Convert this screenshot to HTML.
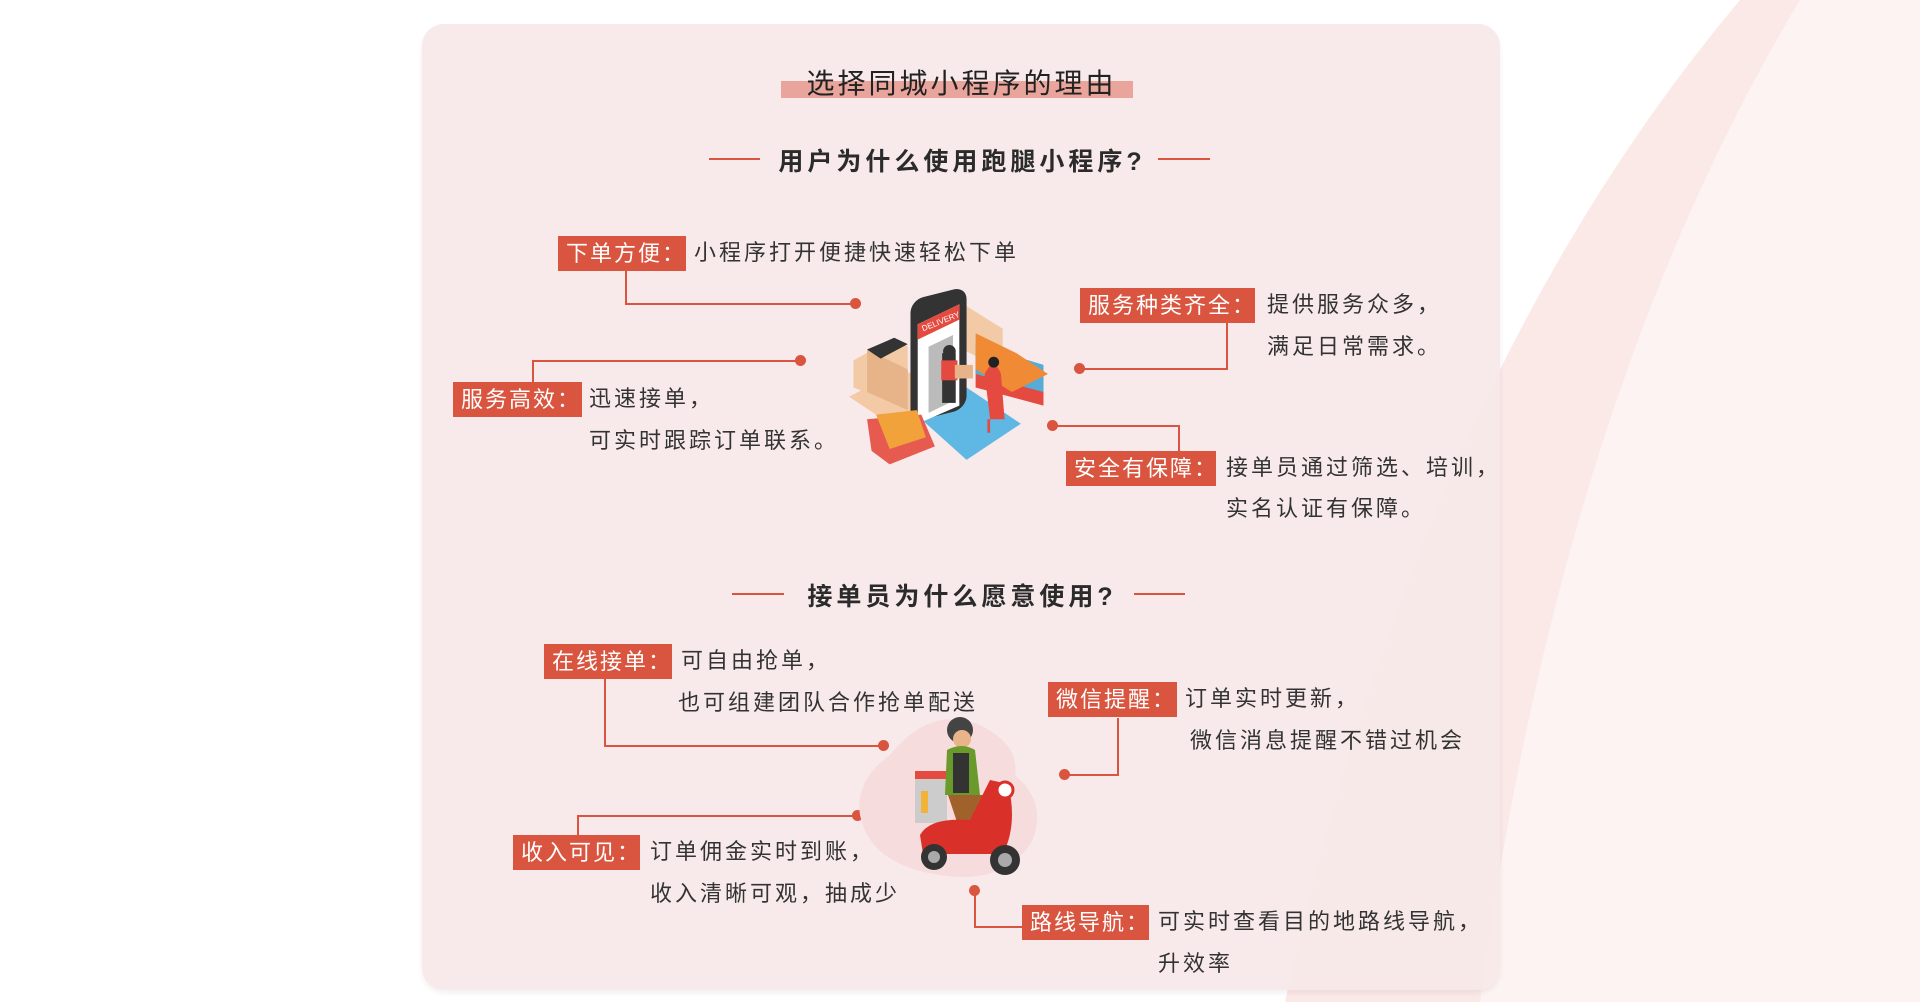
<!DOCTYPE html>
<html><head><meta charset="utf-8"><style>
*{margin:0;padding:0;box-sizing:border-box}
body{width:1920px;height:1002px;background:#fff;position:relative;overflow:hidden;font-family:"Liberation Sans","Noto Sans CJK SC",sans-serif;color:#333}
.bg{position:absolute;left:0;top:0}
.card{position:absolute;left:422px;top:24px;width:1078px;height:966px;border-radius:22px;background:rgba(248,232,232,0.93);box-shadow:0 3px 6px rgba(0,0,0,0.06)}
.t{position:absolute;white-space:nowrap}
.title{left:0;width:1920px;text-align:center;top:62px;font-size:28px;color:#222;letter-spacing:3px;padding-left:3px}
.hl{position:absolute;left:781px;top:81px;width:352px;height:17px;background:#e9a59b}
.sub{left:0;width:1920px;text-align:center;font-size:25px;font-weight:bold;color:#2b2b2b;letter-spacing:4px;padding-left:4px}
.hr{position:absolute;height:2px;background:#d9553f}
.lab{position:absolute;background:#d9553f;color:#fff;font-size:22px;line-height:35px;height:35px;padding-left:8px;white-space:nowrap;letter-spacing:2px}
.tx{position:absolute;font-size:22px;color:#333;white-space:nowrap;line-height:26px;letter-spacing:3px}
.ln{position:absolute;background:#d9553f}
.dot{position:absolute;width:11px;height:11px;border-radius:50%;background:#d9553f}
</style></head><body>
<svg class="bg" width="1920" height="1002"><path d="M1740 0 Q1420 380 1285 1002 L1920 1002 L1920 0Z" fill="#fbe9e8"/><path d="M1800 0 Q1560 400 1480 1002 L1920 1002 L1920 0Z" fill="#fdf3f2"/></svg>
<div class="card"></div>
<div class="hl"></div>
<div class="t title">选择同城小程序的理由</div>
<div class="hr" style="left:709px;top:158px;width:51px"></div>
<div class="hr" style="left:1158px;top:158px;width:52px"></div>
<div class="t sub" style="top:142px">用户为什么使用跑腿小程序?</div>
<div class="hr" style="left:732px;top:593px;width:52px"></div>
<div class="hr" style="left:1134px;top:593px;width:51px"></div>
<div class="t sub" style="top:577px">接单员为什么愿意使用?</div>

<div class="ln" style="left:625px;top:271px;width:2px;height:34px"></div>
<div class="ln" style="left:625px;top:303px;width:230px;height:2px"></div>
<div class="dot" style="left:850px;top:298px"></div>
<div class="ln" style="left:532px;top:361px;width:2px;height:22px"></div>
<div class="ln" style="left:532px;top:360px;width:268px;height:2px"></div>
<div class="dot" style="left:795px;top:355px"></div>
<div class="ln" style="left:1226px;top:323px;width:2px;height:46px"></div>
<div class="ln" style="left:1080px;top:368px;width:148px;height:2px"></div>
<div class="dot" style="left:1074px;top:363px"></div>
<div class="ln" style="left:1178px;top:426px;width:2px;height:26px"></div>
<div class="ln" style="left:1053px;top:425px;width:127px;height:2px"></div>
<div class="dot" style="left:1047px;top:420px"></div>

<div class="lab" style="left:558px;top:236px;width:128px">下单方便：</div>
<div class="tx" style="left:694px;top:240px">小程序打开便捷快速轻松下单</div>
<div class="lab" style="left:1080px;top:288px;width:175px">服务种类齐全：</div>
<div class="tx" style="left:1267px;top:292px">提供服务众多，</div>
<div class="tx" style="left:1267px;top:334px">满足日常需求。</div>
<div class="lab" style="left:453px;top:382px;width:129px">服务高效：</div>
<div class="tx" style="left:589px;top:386px">迅速接单，</div>
<div class="tx" style="left:589px;top:428px">可实时跟踪订单联系。</div>
<div class="lab" style="left:1066px;top:451px;width:150px">安全有保障：</div>
<div class="tx" style="left:1226px;top:455px">接单员通过筛选、培训，</div>
<div class="tx" style="left:1226px;top:496px">实名认证有保障。</div>

<svg style="position:absolute;left:838px;top:288px" width="230" height="190" viewBox="0 0 250 210">
<polygon points="10,120 70,90 130,125 70,160" fill="#f3c9a6"/>
<polygon points="15,80 60,55 75,65 75,135 15,110" fill="#f2cba6"/><polygon points="30,68 75,90 75,135 30,115" fill="#e7b489"/>
<polygon points="30,68 60,55 75,62 45,78" fill="#333"/>
<polygon points="140,20 180,45 180,90 140,70" fill="#f2cba6"/>
<polygon points="150,72 225,95 225,130 150,110" fill="#e44a3f"/>
<polygon points="150,62 225,85 225,115 150,95" fill="#55acd8"/>
<polygon points="150,50 195,72 230,95 190,115 150,90" fill="#f08a35"/>
<polygon points="90,145 140,110 200,150 140,190" fill="#5fb8e4"/>
<rect x="78" y="8" width="62" height="135" rx="14" fill="#333" transform="skewY(-14) translate(0,25)"/>
<polygon points="86,40 132,18 132,130 86,150" fill="#fff"/>
<polygon points="86,40 132,18 132,35 86,57" fill="#e44a3f"/>
<text x="92" y="48" fill="#fff" font-size="9" font-family="Liberation Sans" transform="rotate(-22 92 48)">DELIVERY</text>
<polygon points="98,65 125,52 125,125 98,138" fill="#bbb"/>
<rect x="113" y="72" width="15" height="55" fill="#333"/><circle cx="121" cy="70" r="7" fill="#333"/><rect x="112" y="80" width="18" height="22" fill="#e44a3f"/>
<rect x="127" y="85" width="20" height="15" fill="#e7b489"/>
<path d="M160 95 q10 -20 18 0 l4 50 h-16 z" fill="#e44a3f"/><circle cx="170" cy="82" r="6" fill="#222"/><rect x="163" y="145" width="3" height="15" fill="#e44a3f"/>
<polygon points="30,145 90,140 105,175 55,195 35,180" fill="#e44a3f" opacity=".9"/>
<polygon points="40,140 85,135 95,165 55,178" fill="#f2a23b"/>
</svg>

<div class="ln" style="left:604px;top:678px;width:2px;height:69px"></div>
<div class="ln" style="left:604px;top:745px;width:279px;height:2px"></div>
<div class="dot" style="left:878px;top:740px"></div>
<div class="ln" style="left:1117px;top:718px;width:2px;height:58px"></div>
<div class="ln" style="left:1065px;top:774px;width:54px;height:2px"></div>
<div class="dot" style="left:1059px;top:769px"></div>
<div class="ln" style="left:577px;top:816px;width:2px;height:20px"></div>
<div class="ln" style="left:577px;top:815px;width:280px;height:2px"></div>
<div class="dot" style="left:852px;top:810px"></div>
<div class="ln" style="left:974px;top:890px;width:2px;height:38px"></div>
<div class="ln" style="left:974px;top:926px;width:48px;height:2px"></div>
<div class="dot" style="left:969px;top:885px"></div>

<div class="lab" style="left:544px;top:644px;width:128px">在线接单：</div>
<div class="tx" style="left:681px;top:648px">可自由抢单，</div>
<div class="tx" style="left:678px;top:690px">也可组建团队合作抢单配送</div>
<div class="lab" style="left:1048px;top:682px;width:129px">微信提醒：</div>
<div class="tx" style="left:1185px;top:686px">订单实时更新，</div>
<div class="tx" style="left:1190px;top:728px">微信消息提醒不错过机会</div>
<div class="lab" style="left:513px;top:835px;width:127px">收入可见：</div>
<div class="tx" style="left:650px;top:839px">订单佣金实时到账，</div>
<div class="tx" style="left:650px;top:881px">收入清晰可观，抽成少</div>
<div class="lab" style="left:1022px;top:905px;width:127px">路线导航：</div>
<div class="tx" style="left:1158px;top:909px">可实时查看目的地路线导航，</div>
<div class="tx" style="left:1158px;top:951px">升效率</div>

<svg style="position:absolute;left:850px;top:705px" width="220" height="180" viewBox="0 0 220 180">
<path d="M40 50 Q80 0 130 20 Q170 40 165 70 Q200 100 180 140 Q150 180 90 170 Q20 160 10 110 Q5 75 40 50Z" fill="#f6dcdc"/>
<rect x="65" y="68" width="32" height="50" fill="#ccc"/><rect x="65" y="66" width="32" height="8" fill="#e44a3f"/><rect x="71" y="86" width="7" height="22" fill="#f2b33b"/>
<circle cx="110" cy="25" r="13" fill="#444"/><circle cx="112" cy="34" r="9" fill="#e9b48a"/>
<path d="M97 45 q15 -8 28 0 l5 45 h-35z" fill="#6a9a2b"/><rect x="103" y="48" width="16" height="40" fill="#333"/>
<path d="M98 90 h35 l-10 45 h-10z" fill="#a0622a"/>
<path d="M70 130 q10 -18 50 -15 l20 -40 l18 4 q10 40 -5 70 h-80z" fill="#d9312a"/>
<circle cx="84" cy="152" r="13" fill="#333"/><circle cx="84" cy="152" r="6" fill="#aaa"/>
<circle cx="155" cy="155" r="15" fill="#333"/><circle cx="155" cy="155" r="7" fill="#aaa"/>
<circle cx="155" cy="85" r="8" fill="#fff" stroke="#d9312a" stroke-width="3"/>
</svg>
</body></html>
